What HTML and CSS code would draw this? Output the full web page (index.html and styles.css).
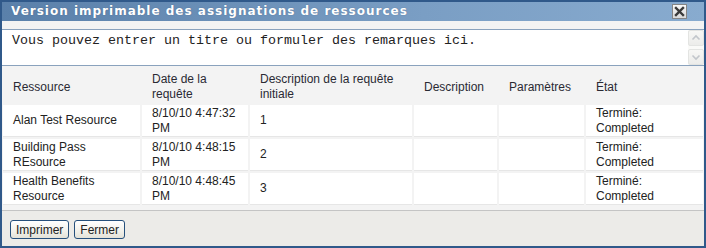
FILE: index.html
```html
<!DOCTYPE html>
<html lang="fr">

<head>
    <meta charset="utf-8">
    <title>Version imprimable des assignations de ressources</title>
    <link rel="stylesheet" href="styles.css">
</head>

<body>
    <div class="dialog">
        <div class="titlebar">
            <span class="title">Version imprimable des assignations de ressources</span>
            <button class="close" title="Fermer">
                <svg width="13" height="13" viewBox="0 0 13 13">
                    <path d="M3 3 L10 10 M10 3 L3 10" stroke="#3a3a3a" stroke-width="2.4" stroke-linecap="square" fill="none" />
                </svg>
            </button>
        </div>

        <div class="content">
            <div class="notes">
                <textarea class="notes-text" spellcheck="false">Vous pouvez entrer un titre ou formuler des remarques ici.</textarea>
                <div class="scrollbar">
                    <span class="scroll-btn">
                        <svg width="14" height="14" viewBox="0 0 14 14">
                            <path d="M3.5 8.5 L7 5 L10.5 8.5" stroke="#c2c6cb" stroke-width="1.6" fill="none" />
                        </svg>
                    </span>
                    <span class="scroll-btn">
                        <svg width="14" height="14" viewBox="0 0 14 14">
                            <path d="M3.5 5.5 L7 9 L10.5 5.5" stroke="#c2c6cb" stroke-width="1.6" fill="none" />
                        </svg>
                    </span>
                </div>
            </div>

            <table class="assignments">
                <thead>
                    <tr>
                        <th class="col-resource">Ressource</th>
                        <th class="col-date">Date de la requête</th>
                        <th class="col-initial">Description de la requête initiale</th>
                        <th class="col-desc">Description</th>
                        <th class="col-params">Paramètres</th>
                        <th>État</th>
                    </tr>
                </thead>
                <tbody>
                    <tr>
                        <td>Alan Test Resource</td>
                        <td>8/10/10 4:47:32 PM</td>
                        <td>1</td>
                        <td></td>
                        <td></td>
                        <td>Terminé: Completed</td>
                    </tr>
                    <tr>
                        <td>Building Pass REsource</td>
                        <td>8/10/10 4:48:15 PM</td>
                        <td>2</td>
                        <td></td>
                        <td></td>
                        <td>Terminé: Completed</td>
                    </tr>
                    <tr>
                        <td>Health Benefits Resource</td>
                        <td>8/10/10 4:48:45 PM</td>
                        <td>3</td>
                        <td></td>
                        <td></td>
                        <td>Terminé: Completed</td>
                    </tr>
                </tbody>
            </table>
        </div>

        <div class="actions">
            <button class="btn">Imprimer</button>
            <button class="btn">Fermer</button>
        </div>
    </div>
</body>

</html>
```

FILE: styles.css
```css
* {
    margin: 0;
    padding: 0;
    box-sizing: border-box;
}

body {
    font-family: "Liberation Sans", Arial, sans-serif;
    font-size: 12px;
    color: #222;
    background: #fff;
}

.dialog {
    width: 706px;
    height: 248px;
    border: 2px solid #30598a;
    display: flex;
    flex-direction: column;
    background-color: #f3f3f3;
}

/* title bar */
.titlebar {
    height: 19px;
    display: flex;
    align-items: center;
    justify-content: space-between;
    padding: 0 17px 0 9px;
    background: linear-gradient(to right, #5a80aa, #7a9ec4 60%, #88abcf);
}

.title {
    font-family: "DejaVu Sans", Verdana, sans-serif;
    font-weight: bold;
    font-size: 12px;
    line-height: 19px;
    letter-spacing: 1px;
    color: #fff;
    text-shadow: 0 0 1px rgba(40, 70, 110, 0.6);
}

.close {
    width: 15px;
    height: 15px;
    border: 1px solid #858585;
    background: linear-gradient(#f8f8f8, #dadada);
    display: flex;
    align-items: center;
    justify-content: center;
}

/* notes */
.content {
    padding-top: 8px;
}

.notes {
    display: flex;
    height: 37px;
    background: #fff;
    border-top: 1px solid #8aa2bd;
    border-bottom: 1px solid #8aa2bd;
}

.notes-text {
    flex: 1;
    border: none;
    resize: none;
    overflow: hidden;
    outline: none;
    padding: 3px 10px;
    font-family: "Liberation Mono", "Courier New", monospace;
    font-size: 13.33px;
    line-height: 16px;
    color: #222;
}

.scrollbar {
    width: 16px;
    display: flex;
    flex-direction: column;
    justify-content: space-between;
    background: #fafaf8;
}

.scroll-btn {
    width: 16px;
    height: 16px;
    border: 1px solid #e3e4e2;
    border-radius: 2px;
    background: linear-gradient(#f7f7f5, #ececea);
    display: flex;
    align-items: center;
    justify-content: center;
}

/* table */
.assignments {
    width: 704px;
    margin: 0 -1px 3px;
    border-collapse: separate;
    border-spacing: 2px;
    table-layout: fixed;
}

.assignments th,
.assignments td {
    text-align: left;
    vertical-align: middle;
    font-weight: normal;
    line-height: 15px;
    padding: 0 10px;
}

.assignments th {
    height: 35px;
    padding-top: 4px;
    padding-bottom: 1px;
    color: #2a2a33;
}

.assignments td {
    height: 32px;
    background: #fff;
    border-bottom: 1px solid #e6e6e6;
}

.col-resource {
    width: 137px;
}

.col-date {
    width: 106px;
}

.col-initial {
    width: 162px;
}

.col-desc {
    width: 83px;
}

.col-params {
    width: 85px;
}

/* buttons */
.actions {
    flex: 1;
    display: flex;
    gap: 5px;
    padding: 9px 8px 0;
    border-top: 1px solid #c4c4c4;
    background-color: #ecebe8;
}

.btn {
    height: 19px;
    padding: 0 5px;
    border: 1px solid #26507c;
    border-radius: 3px;
    background: linear-gradient(#ffffff, #f1f0ea 60%, #e4e2d8);
    font-family: "Liberation Sans", Arial, sans-serif;
    font-size: 12px;
    color: #222;
}
```
